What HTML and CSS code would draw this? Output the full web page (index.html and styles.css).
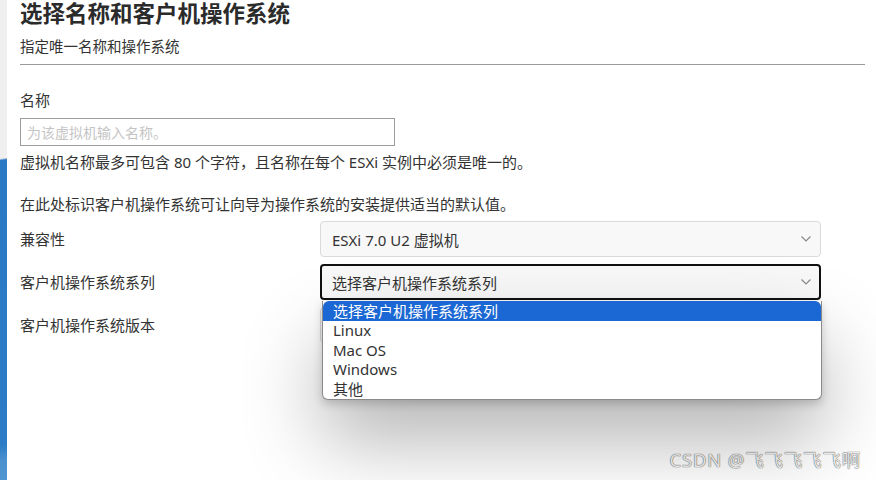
FILE: index.html
```html
<!DOCTYPE html>
<html lang="zh-CN">
<head>
<meta charset="utf-8">
<link rel="stylesheet" href="styles.css">
</head>
<body>
<main class="wizard">
  <h1 class="title">选择名称和客户机操作系统</h1>
  <p class="subtitle">指定唯一名称和操作系统</p>
  <hr class="rule">

  <label class="field-label" for="vm-name">名称</label>
  <input class="text-input" id="vm-name" type="text" placeholder="为该虚拟机输入名称。">
  <p class="hint">虚拟机名称最多可包含 80 个字符，且名称在每个 ESXi 实例中必须是唯一的。</p>

  <p class="intro">在此处标识客户机操作系统可让向导为操作系统的安装提供适当的默认值。</p>

  <div class="form-grid">
    <span class="row-label">兼容性</span>
    <div class="select">
      <span>ESXi 7.0 U2 虚拟机</span>
      <svg class="chev" width="10" height="6" viewBox="0 0 10 6"><polyline points="0.5,0.5 5,5 9.5,0.5" fill="none" stroke="#8a8a8a" stroke-width="1.2"/></svg>
    </div>

    <span class="row-label">客户机操作系统系列</span>
    <div class="select select-open">
      <span>选择客户机操作系统系列</span>
      <svg class="chev" width="10" height="6" viewBox="0 0 10 6"><polyline points="0.5,0.5 5,5 9.5,0.5" fill="none" stroke="#8a8a8a" stroke-width="1.2"/></svg>
      <ul class="options">
        <li class="opt opt-active">选择客户机操作系统系列</li>
        <li class="opt">Linux</li>
        <li class="opt">Mac OS</li>
        <li class="opt">Windows</li>
        <li class="opt">其他</li>
      </ul>
    </div>

    <span class="row-label">客户机操作系统版本</span>
    <div class="select select-blank"></div>
  </div>
</main>
<div class="watermark">CSDN @飞飞飞飞飞啊</div>
</body>
</html>
```

FILE: styles.css
```css
html {
  height: 100%;
  overflow: hidden;
}

/* the desktop peeking out left of the dialog */
body {
  margin: 0;
  height: 100%;
  background-color: #2b7bc6;
  background-image: linear-gradient(172deg, #efefef 0, #efefef 157px, #2a79c4 159px, #2b7bc6 440px, #4b91cf 456px, #5097d2 480px);
  background-repeat: no-repeat;
  font-family: "Noto Sans", "Noto Sans CJK SC", sans-serif;
  font-size: 15px;
  color: #333;
}

.wizard {
  box-sizing: border-box;
  height: 480px;
  margin-left: 7px;
  padding: 0 11px 0 13px;
  background: #fff;
}

.title {
  margin: 0;
  padding-top: 2px;
  font-family: "Liberation Sans", "Noto Sans CJK SC", sans-serif;
  font-size: 22.5px;
  line-height: 26px;
  font-weight: bold;
  color: #2b2b2b;
}

.subtitle {
  margin: 8px 0 0;
  font-size: 14.5px;
  line-height: 20px;
}

.rule {
  margin: 8px 0 0;
  border: 0;
  border-top: 1px solid #9a9a9a;
}

.field-label {
  display: block;
  margin-top: 25px;
  line-height: 20px;
  font-size: 15px;
}

.text-input {
  display: block;
  box-sizing: border-box;
  width: 375px;
  height: 28px;
  margin-top: 8px;
  padding: 0 6px;
  border: 1px solid #9c9c9c;
  border-radius: 0;
  font: inherit;
  font-size: 14px;
  outline: none;
}

.text-input::placeholder {
  color: #c4c4c4;
}

.hint {
  margin: 6px 0 0;
  line-height: 20px;
  font-size: 15px;
}

.intro {
  margin: 22px 0 0;
  line-height: 20px;
  font-size: 15px;
}

.form-grid {
  display: grid;
  grid-template-columns: 300px 501px;
  row-gap: 7px;
  align-items: center;
  margin-top: 7px;
}

.row-label {
  line-height: 20px;
  font-size: 15px;
}

.select {
  position: relative;
  box-sizing: border-box;
  height: 36px;
  display: flex;
  align-items: center;
  justify-content: space-between;
  padding: 0 9px 0 11px;
  background: #f8f8f8;
  border: 1px solid #dadada;
  border-radius: 4px;
  color: #333;
}

.select-open {
  border: 2px solid #111;
  padding-left: 10px;
  padding-right: 8px;
}

.select-blank {
  background: #f8f8f8;
}

.chev {
  display: block;
}

.options {
  position: absolute;
  top: 100%;
  left: 0;
  width: 498px;
  margin: 3px 0 0;
  padding: 0;
  list-style: none;
  background: #fff;
  border: 1px solid #8a8a8a;
  border-top: 0;
  border-radius: 0 0 6px 6px;
  box-shadow: 0 40px 80px rgba(0, 0, 0, 0.3), 0 4px 10px rgba(0, 0, 0, 0.18);
  overflow: hidden;
  z-index: 5;
}

.opt {
  height: 19.5px;
  line-height: 19.5px;
  padding-left: 10px;
  color: #333;
}

.opt-active {
  height: 20px;
  line-height: 20px;
  background: #1b67d3;
  color: #fff;
  border-radius: 6px 6px 0 0;
}

.watermark {
  position: absolute;
  right: 15px;
  bottom: 8px;
  font-size: 18.5px;
  color: #f4f4f4;
  text-shadow: 0 0 1px #666, 0 0 1px #666;
  letter-spacing: 0.8px;
}
```
